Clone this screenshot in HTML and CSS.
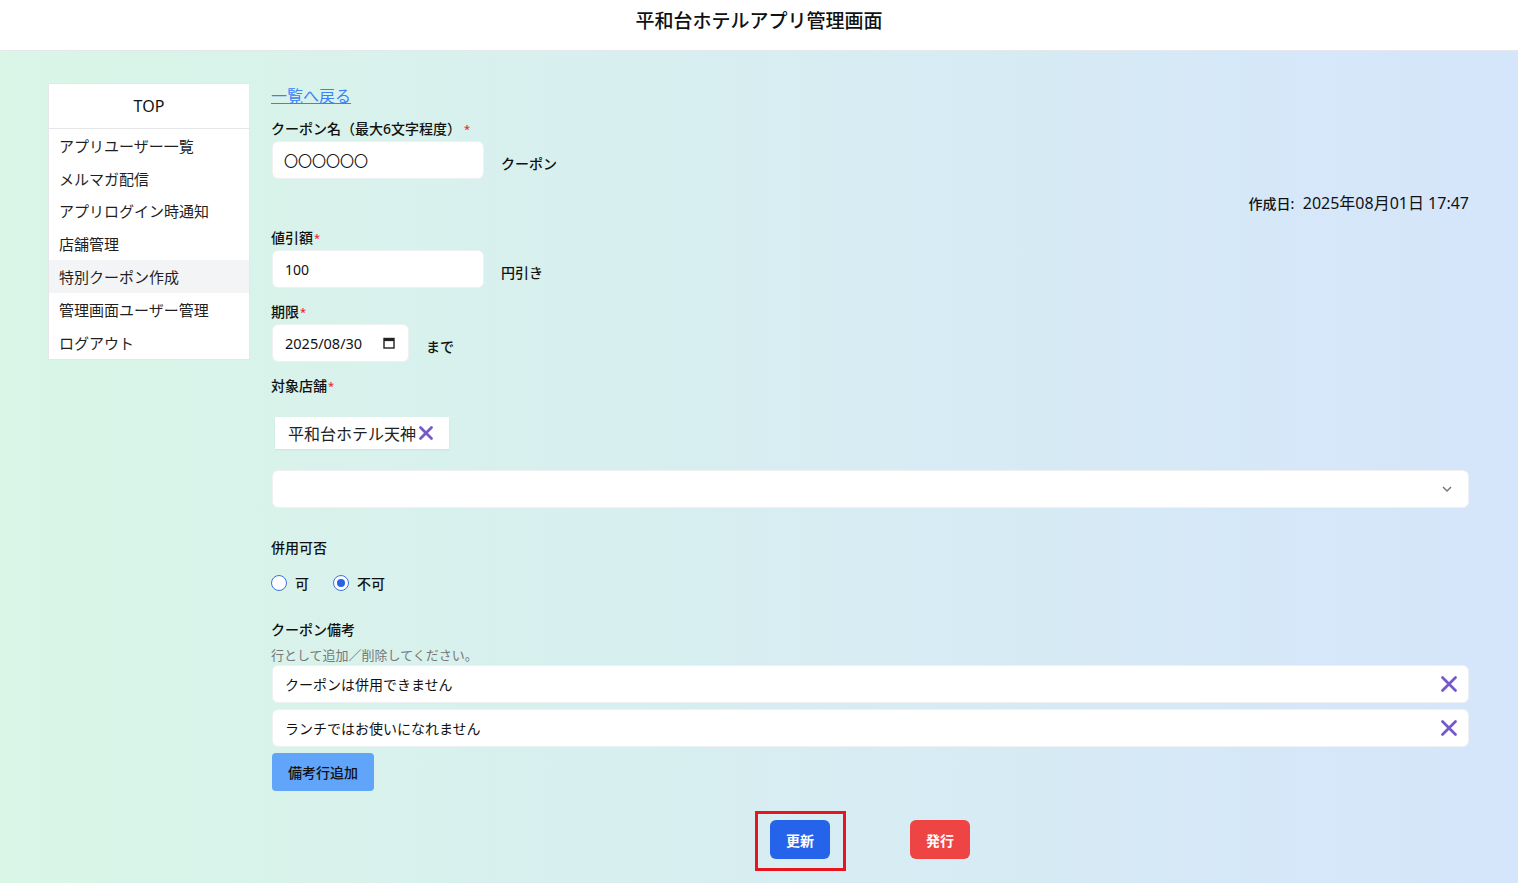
FILE: index.html
```html
<!DOCTYPE html>
<html lang="ja">
<head>
<meta charset="utf-8">
<title>平和台ホテルアプリ管理画面</title>
<link rel="stylesheet" href="styles.css">
</head>
<body>
<header class="topbar"><h1 class="title">平和台ホテルアプリ管理画面</h1></header>
<div class="page">
  <nav class="sidebar">
    <div class="side-top">TOP</div>
    <ul class="menu">
      <li>アプリユーザー一覧</li>
      <li>メルマガ配信</li>
      <li>アプリログイン時通知</li>
      <li>店舗管理</li>
      <li class="active">特別クーポン作成</li>
      <li>管理画面ユーザー管理</li>
      <li>ログアウト</li>
    </ul>
  </nav>
  <main class="main">
    <a class="back" href="#">一覧へ戻る</a>
    <div class="label l-first">クーポン名（最大6文字程度）<span class="req">*</span></div>
    <div class="field-row">
      <div class="input w212 big">〇〇〇〇〇〇</div>
      <span class="suffix">クーポン</span>
    </div>
    <div class="created"><b>作成日:</b>&nbsp; 2025年08月01日 17:47</div>
    <div class="label l-mid">値引額<span class="req">*</span></div>
    <div class="field-row">
      <div class="input w212">100</div>
      <span class="suffix">円引き</span>
    </div>
    <div class="label l-mid">期限<span class="req">*</span></div>
    <div class="field-row">
      <div class="input date">2025/08/30
        <svg class="cal" width="12" height="12" viewBox="0 0 12 12"><rect x="1" y="1.5" width="10" height="9.5" fill="none" stroke="#222" stroke-width="1.4"/><rect x="1" y="1.5" width="10" height="2.6" fill="#222"/></svg>
      </div>
      <span class="suffix">まで</span>
    </div>
    <div class="label l-mid">対象店舗<span class="req">*</span></div>
    <div class="chip">平和台ホテル天神<svg class="x" width="18" height="18" viewBox="0 0 18 18"><path d="M3.5 3.5 14.5 14.5M14.5 3.5 3.5 14.5" stroke="#7659c9" stroke-width="2.8" stroke-linecap="round"/></svg></div>
    <div class="select">
      <svg width="12" height="8" viewBox="0 0 12 8"><path d="M2 2 6 6 10 2" fill="none" stroke="#777" stroke-width="1.5"/></svg>
    </div>
    <div class="label l-use">併用可否</div>
    <div class="radios">
      <label class="radio"><span class="dot"></span>可</label>
      <label class="radio"><span class="dot on"></span>不可</label>
    </div>
    <div class="label l-note">クーポン備考</div>
    <div class="hint">行として追加／削除してください。</div>
    <div class="note-row">クーポンは併用できません<svg class="x" width="20" height="20" viewBox="0 0 20 20"><path d="M3.5 3.5 16.5 16.5M16.5 3.5 3.5 16.5" stroke="#7659c9" stroke-width="2.8" stroke-linecap="round"/></svg></div>
    <div class="note-row">ランチではお使いになれません<svg class="x" width="20" height="20" viewBox="0 0 20 20"><path d="M3.5 3.5 16.5 16.5M16.5 3.5 3.5 16.5" stroke="#7659c9" stroke-width="2.8" stroke-linecap="round"/></svg></div>
    <button class="add-btn">備考行追加</button>
    <div class="actions">
      <button class="btn primary marked">更新</button>
      <button class="btn danger">発行</button>
    </div>
  </main>
</div>
</body>
</html>
```
FILE: styles.css
```css
* { box-sizing: border-box; }
html, body { margin: 0; padding: 0; }
body {
  font-family: "Noto Sans", "Noto Sans CJK JP", sans-serif;
  color: #1f2328;
  background: linear-gradient(to right, #d9f6e7, #d5e5fb);
  min-height: 883px;
}
.topbar {
  height: 51px;
  background: #fff;
  border-bottom: 1px solid #e5e7eb;
  display: flex;
  align-items: center;
  justify-content: center;
}
.title {
  margin: 0;
  font-size: 19px;
  font-weight: 500;
  color: #111;
  line-height: 1;
  padding-bottom: 7px;
}
.page {
  display: flex;
  gap: 21px;
  padding: 32px 49px 12px 48px;
  align-items: flex-start;
}
.sidebar {
  width: 202px;
  flex: none;
  background: #fff;
  border: 1px solid #e5e7eb;
}
.side-top {
  height: 45px;
  display: flex;
  align-items: center;
  justify-content: center;
  font-size: 16px;
  border-bottom: 1px solid #e5e7eb;
  color: #111;
}
.menu { list-style: none; margin: 0; padding: 0; }
.menu li {
  height: 32.8px;
  display: flex;
  align-items: center;
  padding-left: 10px;
  font-size: 15px;
  color: #1f1f1f;
}
.menu li.active { background: #f3f4f6; }
.main { flex: 1; display: flex; flex-direction: column; align-items: flex-start; }
.back {
  font-size: 16px;
  line-height: 24px;
  margin-top: 1px;
  color: #3b82f6;
  text-decoration: underline;
}
.label {
  font-size: 14px;
  font-weight: 500;
  line-height: 20px;
  margin-bottom: 2px;
  color: #111;
}
.req { color: #ef2b2b; font-size: 11px; vertical-align: top; margin-left: 1px; }
.l-first { margin-top: 11px; }
.l-first .req { margin-left: 3px; }
.l-mid { margin-top: 14px; }
.l-use { margin-top: 30px; }
.l-note { margin-top: 27px; }
.field-row { display: flex; align-items: center; gap: 17px; margin-left: 1px; }
.input {
  height: 38px;
  background: #fff;
  border-radius: 6px;
  border: 1px solid #eef0f2;
  display: flex;
  align-items: center;
  padding-left: 12px;
  font-size: 14px;
  color: #111;
}
.w212 { width: 212px; }
.big { font-size: 14px; padding-left: 11px; }
.date { width: 137px; font-size: 14.5px; gap: 21px; }
.suffix { font-size: 14px; font-weight: 500; padding-top: 6px; color: #111; }
.created {
  align-self: stretch;
  text-align: right;
  font-size: 16px;
  line-height: 20px;
  margin-top: 14px;
  color: #111;
}
.created b { font-weight: 500; font-size: 14px; }
.chip {
  margin-top: 19px;
  margin-left: 4px;
  height: 32px;
  background: #fff;
  box-shadow: 0 1px 2px rgba(0,0,0,0.06);
  display: flex;
  align-items: center;
  padding: 0 14px 0 13px;
  font-size: 16px;
  color: #222;
  gap: 1px;
}
.select {
  margin-top: 21px;
  margin-left: 1px;
  align-self: stretch;
  height: 38px;
  background: #fff;
  border-radius: 6px;
  border: 1px solid #eef0f2;
  display: flex;
  align-items: center;
  justify-content: flex-end;
  padding-right: 15px;
}
.radios { display: flex; gap: 24px; margin-top: 13px; height: 20px; align-items: center; }
.radio { display: flex; align-items: center; gap: 8px; font-size: 14px; font-weight: 500; color: #111; }
.dot {
  width: 16px; height: 16px; border-radius: 50%;
  border: 1.5px solid #3b72e0; background: #fff;
  position: relative;
}
.dot.on::after {
  content: ""; position: absolute; left: 2.5px; top: 2.5px;
  width: 8px; height: 8px; border-radius: 50%; background: #2563eb;
}
.hint { font-size: 13px; color: #777; line-height: 18px; margin-top: 4px; }
.note-row {
  align-self: stretch;
  margin-left: 1px;
  height: 38px;
  background: #fff;
  border-radius: 6px;
  border: 1px solid #eef0f2;
  display: flex;
  align-items: center;
  justify-content: space-between;
  padding: 0 9px 0 12px;
  font-size: 14px;
  color: #111;
  margin-bottom: 6px;
}
.hint + .note-row { margin-top: 1px; }
.add-btn {
  margin-left: 1px;
  width: 102px; height: 38px;
  background: #60a5fa;
  border: none; border-radius: 4px;
  font-family: inherit; font-size: 14px; font-weight: 500; color: #111;
}
.actions { align-self: stretch; display: flex; justify-content: center; gap: 80px; margin-top: 29px; }
.btn {
  width: 60px; height: 39px; border: none; border-radius: 6px;
  font-family: inherit; font-size: 14px; font-weight: 700; color: #fff;
}
.primary { background: #2563eb; }
.danger { background: #ef4444; }
.marked { position: relative; }
.marked::before {
  content: ""; position: absolute;
  left: -15px; right: -16px; top: -9px; bottom: -12px;
  border: 3px solid #e8141e;
}
```
